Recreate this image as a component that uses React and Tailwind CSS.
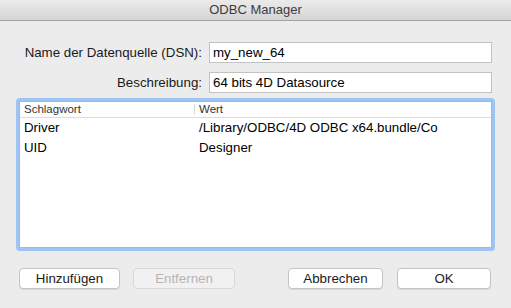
import React from 'react';

const font = { fontFamily: '"Liberation Sans", Arial, sans-serif' };

function Field({ label, value }) {
    return (
        <div className="flex items-center">
            <div className="w-[209px] pr-[7px] text-right text-[13.3px] text-[#1a1a1a] whitespace-nowrap">{label}</div>
            <div className="w-[283px] h-[21px] bg-white border border-[#c2c2c2] flex items-center pl-[3px] text-[13.3px] text-black">
                {value}
            </div>
        </div>
    );
}

function Button({ children, disabled, className }) {
    return (
        <button
            className={`h-[21px] rounded-[4px] border text-[13.3px] flex items-center justify-center ${disabled
                ? 'bg-[#f1f1f1] border-[#d8d8d8] text-[#b5b5b5]'
                : 'bg-white border-[#c4c4c4] text-[#1a1a1a] shadow-[0_1px_0_rgba(0,0,0,0.08)]'
                } ${className}`}
        >
            {children}
        </button>
    );
}

export default function App() {
    const rows = [
        { key: 'Driver', value: '/Library/ODBC/4D ODBC x64.bundle/Co' },
        { key: 'UID', value: 'Designer' },
    ];

    return (
        <div className="w-[511px] h-[308px] bg-[#ececec] flex flex-col overflow-hidden" style={font}>
            {/* Title bar */}
            <div className="h-[21px] bg-gradient-to-b from-[#ebebeb] to-[#d5d5d5] border-b border-[#a3a3a3] flex items-center justify-center text-[13px] text-[#3c3c3c]">
                ODBC Manager
            </div>

            {/* Form */}
            <div className="flex flex-col gap-[9px] pt-[21px]">
                <Field label="Name der Datenquelle (DSN):" value="my_new_64" />
                <Field label="Beschreibung:" value="64 bits 4D Datasource" />
            </div>

            {/* Table */}
            <div className="ml-[16px] mt-[5px] w-[479px] h-[153px] bg-[#9dc4f2] rounded-[4px] p-[3px]">
                <div className="h-full bg-white border border-[#b5b5b5] flex flex-col">
                    <div className="h-[16px] flex border-b border-[#dcdcdc] text-[11.5px] text-[#333]">
                        <div className="w-[174px] pl-[4px] flex items-center">Schlagwort</div>
                        <div className="w-px my-[2px] bg-[#dcdcdc]" />
                        <div className="pl-[4px] flex items-center">Wert</div>
                    </div>
                    {rows.map((r) => (
                        <div key={r.key} className="h-[20px] flex items-center text-[13.3px] text-black">
                            <div className="w-[175px] pl-[4px]">{r.key}</div>
                            <div className="pl-[4px] whitespace-nowrap">{r.value}</div>
                        </div>
                    ))}
                </div>
            </div>

            {/* Buttons */}
            <div className="flex mt-[17px] px-[19px]">
                <Button className="w-[101px]">Hinzufügen</Button>
                <Button disabled className="w-[102px] ml-[13px]">Entfernen</Button>
                <Button className="w-[95px] ml-[53px]">Abbrechen</Button>
                <Button className="w-[94px] ml-[14px]">OK</Button>
            </div>
        </div>
    );
}
